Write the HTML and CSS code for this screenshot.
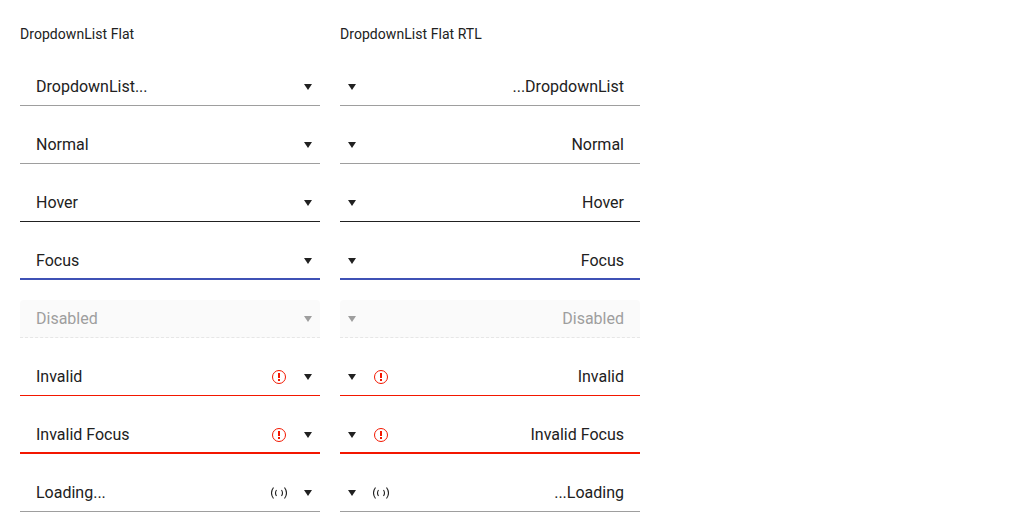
FILE: index.html
```
<!DOCTYPE html>
<html lang="en">
<head>
<meta charset="utf-8">
<title>DropdownList Flat</title>
<link rel="stylesheet" href="styles.css">
</head>
<body>
<svg class="defs" aria-hidden="true">
<symbol id="arrow" viewBox="0 0 16 16"><path d="M4 5h8l-4 6z"/></symbol>
<symbol id="warn" viewBox="0 0 16 16"><circle cx="8" cy="8" r="6.500" fill="none" stroke="currentColor"/><path d="M7 4h2v5H7zM7 10h2v2H7z"/></symbol>
<symbol id="load" viewBox="0 0 16 16"><path d="M2.500 2.500Q-1.500 8 2.500 13.500M5.500 5Q3.500 8 5.500 11M10.500 5Q12.500 8 10.500 11M13.500 2.500Q17.500 8 13.500 13.500" fill="none" stroke="currentColor" stroke-width="1.100"/></symbol>
</svg>
<main class="grid">
<section class="column">
<h1 class="title">DropdownList Flat</h1>
<div class="dropdown"><span class="value">DropdownList...</span><svg class="icon"><use href="#arrow"/></svg></div>
<div class="dropdown"><span class="value">Normal</span><svg class="icon"><use href="#arrow"/></svg></div>
<div class="dropdown hover"><span class="value">Hover</span><svg class="icon"><use href="#arrow"/></svg></div>
<div class="dropdown focus"><span class="value">Focus</span><svg class="icon"><use href="#arrow"/></svg></div>
<div class="dropdown disabled"><span class="value">Disabled</span><svg class="icon"><use href="#arrow"/></svg></div>
<div class="dropdown invalid"><span class="value">Invalid</span><svg class="icon status warning"><use href="#warn"/></svg><svg class="icon"><use href="#arrow"/></svg></div>
<div class="dropdown invalid-focus"><span class="value">Invalid Focus</span><svg class="icon status warning"><use href="#warn"/></svg><svg class="icon"><use href="#arrow"/></svg></div>
<div class="dropdown"><span class="value">Loading...</span><svg class="icon status"><use href="#load"/></svg><svg class="icon"><use href="#arrow"/></svg></div>
</section>
<section class="column">
<h1 class="title">DropdownList Flat RTL</h1>
<div class="dropdown" dir="rtl"><span class="value">DropdownList...</span><svg class="icon"><use href="#arrow"/></svg></div>
<div class="dropdown" dir="rtl"><span class="value">Normal</span><svg class="icon"><use href="#arrow"/></svg></div>
<div class="dropdown hover" dir="rtl"><span class="value">Hover</span><svg class="icon"><use href="#arrow"/></svg></div>
<div class="dropdown focus" dir="rtl"><span class="value">Focus</span><svg class="icon"><use href="#arrow"/></svg></div>
<div class="dropdown disabled" dir="rtl"><span class="value">Disabled</span><svg class="icon"><use href="#arrow"/></svg></div>
<div class="dropdown invalid" dir="rtl"><span class="value">Invalid</span><svg class="icon status warning"><use href="#warn"/></svg><svg class="icon"><use href="#arrow"/></svg></div>
<div class="dropdown invalid-focus" dir="rtl"><span class="value">Invalid Focus</span><svg class="icon status warning"><use href="#warn"/></svg><svg class="icon"><use href="#arrow"/></svg></div>
<div class="dropdown" dir="rtl"><span class="value">Loading...</span><svg class="icon status"><use href="#load"/></svg><svg class="icon"><use href="#arrow"/></svg></div>
</section>
</main>
</body>
</html>
```
FILE: styles.css
```
* { box-sizing: border-box; }
body { margin: 0; background: #fff; color: #212121; font-family: Roboto, sans-serif; font-size: 16px; }
.defs { display: none; }
.grid { display: grid; grid-template-columns: 300px 300px; gap: 20px; padding: 20px; }
.column { display: flex; flex-direction: column; gap: 20px; }
.title { margin: 0; height: 28px; font-size: 14px; font-weight: 400; line-height: 28px; letter-spacing: 0.05px; }
.dropdown { display: flex; align-items: flex-start; height: 38px; border-bottom: 1px solid #9e9e9e; }
.value { flex: 1; padding: 7px 16px 0; line-height: 24px; }
.icon { width: 16px; height: 16px; margin-top: 11px; margin-inline-end: 4px; fill: currentColor; }
.status { margin-inline-end: 13px; }
.warning { color: #f31700; }
.hover { border-bottom-color: #212121; }
.focus { border-bottom: 2px solid #3f51b5; }
.disabled { color: #9e9e9e; background: #fafafa; border-bottom: 1px dashed #e6e6e6; border-radius: 4px 4px 0 0; }
.invalid { border-bottom-color: #f31700; }
.invalid-focus { border-bottom: 2px solid #f31700; }
```
